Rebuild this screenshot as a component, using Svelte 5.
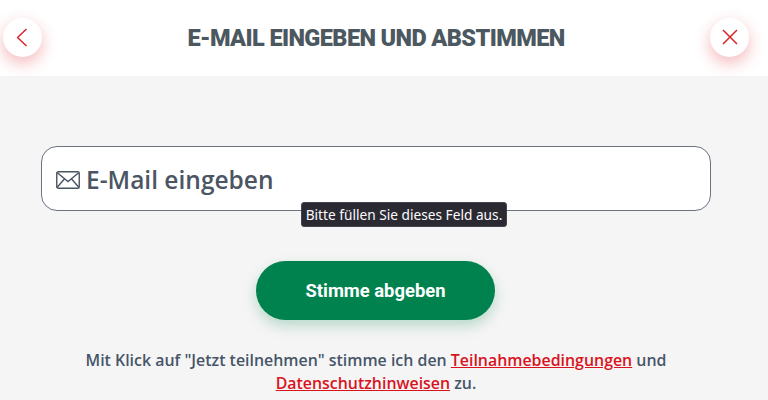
<script>
  let email = "";
</script>

<header>
  <button class="round" aria-label="Zurück">
    <svg width="12" height="19" viewBox="0 0 12 19"><path d="M9.5 1 L0.5 9.5 L9.5 18" /></svg>
  </button>
  <h1>E-MAIL EINGEBEN UND ABSTIMMEN</h1>
  <button class="round" aria-label="Schließen">
    <svg width="16" height="16" viewBox="0 0 16 16"><path d="M1 1 L15 15 M15 1 L1 15" /></svg>
  </button>
</header>

<main>
  <div class="field">
    <svg class="mail" width="24" height="18" viewBox="0 0 24 18">
      <rect x="0.75" y="0.75" width="22.5" height="16.5" rx="1.5" />
      <path d="M1 1.5 L12 10.5 L23 1.5 M1 16.5 L8.6 7.8 M23 16.5 L15.4 7.8" />
    </svg>
    <input type="email" bind:value={email} placeholder="E-Mail eingeben" />
    <div class="tooltip">Bitte füllen Sie dieses Feld aus.</div>
  </div>

  <button class="submit">Stimme abgeben</button>

  <p class="terms">
    Mit Klick auf "Jetzt teilnehmen" stimme ich den <a href="#terms">Teilnahmebedingungen</a> und
    <a href="#privacy">Datenschutzhinweisen</a> zu.
  </p>
</main>

<style>
  :global(body) {
    margin: 0;
    background: #f5f5f5;
    overflow: hidden;
  }

  * {
    box-sizing: border-box;
  }

  header {
    height: 76px;
    background: #fff;
    display: flex;
    align-items: center;
    justify-content: space-between;
    padding: 0 19px 2px 3px;
  }

  h1 {
    margin: 2px 0 0;
    font-family: "Roboto", sans-serif;
    font-weight: 900;
    font-size: 23.5px;
    letter-spacing: -0.6px;
    color: #4c5860;
  }

  .round {
    width: 39px;
    height: 39px;
    padding: 0;
    border: none;
    border-radius: 50%;
    background: #fff;
    box-shadow: 0 6px 16px rgba(224, 30, 40, 0.32);
    display: flex;
    align-items: center;
    justify-content: center;
  }

  .round svg {
    fill: none;
    stroke: #d9232b;
    stroke-width: 1.5;
  }

  main {
    display: flex;
    flex-direction: column;
    align-items: center;
    padding: 70px 16px 0 0;
  }

  .field {
    position: relative;
    width: 670px;
    height: 65px;
    background: #fff;
    border: 1px solid #6b7280;
    border-radius: 16px;
    display: flex;
    align-items: center;
    gap: 6px;
    padding: 2px 14px 0;
  }

  .mail {
    flex: none;
    fill: none;
    stroke: #4b5563;
    stroke-width: 1.4;
  }

  input {
    flex: 1;
    min-width: 0;
    border: none;
    outline: none;
    background: none;
    padding: 0;
    font-family: "Open Sans", sans-serif;
    font-weight: 600;
    font-size: 24.5px;
    color: #4b5563;
  }

  input::placeholder {
    color: #4b5563;
    opacity: 1;
  }

  .tooltip {
    position: absolute;
    left: 259px;
    top: 55px;
    height: 25px;
    width: 206px;
    background: #2b2a33;
    border: 1px solid #45444d;
    border-radius: 3px;
    color: #fbfbfe;
    font-family: "Noto Sans", sans-serif;
    font-size: 13.7px;
    line-height: 23px;
    text-align: center;
    white-space: nowrap;
  }

  .submit {
    margin: 50px 1px 0 0;
    width: 239px;
    height: 59px;
    border: none;
    border-radius: 30px;
    background: #00824f;
    color: #fff;
    font-family: "Roboto", sans-serif;
    font-weight: 700;
    font-size: 18.4px;
    box-shadow: 0 6px 14px rgba(0, 130, 79, 0.25);
  }

  .terms {
    margin: 29px 0 0;
    width: 640px;
    text-align: center;
    font-family: "Open Sans", sans-serif;
    font-weight: 600;
    font-size: 15.92px;
    line-height: 23px;
    color: #475569;
  }

  a {
    color: #d9131e;
    text-decoration: underline;
  }
</style>
